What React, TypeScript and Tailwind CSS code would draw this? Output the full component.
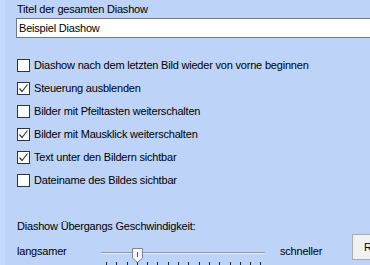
import React from "react";

function Box({ checked }: { checked: boolean }) {
  return (
    <div className="w-[13px] h-[13px] border border-[#333333] bg-white flex items-center justify-center shrink-0">
      {checked && (
        <svg width="11" height="11" viewBox="0 0 11 11">
          <path d="M1.5 5.5 L4 8.5 L9.5 1.5" fill="none" stroke="#3c3c3c" strokeWidth="1.2" />
        </svg>
      )}
    </div>
  );
}

const items: [string, boolean][] = [
  ["Diashow nach dem letzten Bild wieder von vorne beginnen", false],
  ["Steuerung ausblenden", true],
  ["Bilder mit Pfeiltasten weiterschalten", false],
  ["Bilder mit Mausklick weiterschalten", true],
  ["Text unter den Bildern sichtbar", true],
  ["Dateiname des Bildes sichtbar", false],
];

export default function App() {
  const ticks = Array.from({ length: 16 }, (_, i) => i);
  return (
    <div
      className="w-[370px] h-[265px] overflow-hidden bg-[#bdd3f8] flex text-[11px] tracking-[-0.2px] text-black"
      style={{ fontFamily: '"Liberation Sans", Arial, sans-serif' }}
    >
      <div className="w-[5px] bg-[#c4d9fb] shrink-0" />
      <div className="flex-1 flex flex-col pl-[12px] pt-[3px]">
        <div className="leading-[13px] h-[16px]">Titel der gesamten Diashow</div>
        <div className="-ml-[1px] h-[21px] border border-[#6f7c88] border-r-0 bg-white flex items-center pl-[2px] leading-[13px]">
          Beispiel Diashow
        </div>
        <div className="flex flex-col mt-[21px] gap-[10px]">
          {items.map(([t, c]) => (
            <div key={t} className="flex items-center gap-[4px] h-[13px]">
              <Box checked={c} />
              <span className="leading-[13px]">{t}</span>
            </div>
          ))}
        </div>
        <div className="mt-[33px] leading-[13px]">Diashow Übergangs Geschwindigkeit:</div>
        <div className="flex mt-[2px] items-start">
          <div className="w-[84px] pt-[10px] leading-[13px]">langsamer</div>
          <div className="relative w-[164px] h-[30px]">
            <div className="absolute left-0 right-0 top-[17px] h-[1px] bg-[#8a98a6]" />
            <div className="absolute left-0 right-0 top-[18px] h-[1px] bg-[#e6eefc]" />
            <svg className="absolute left-[31px] top-[13px]" width="11" height="15" viewBox="0 0 11 15">
              <path d="M0.5 0.5 H10.5 V10 L5.5 14.5 L0.5 10 Z" fill="#f4f6fa" stroke="#7a8694" />
              <path d="M5.5 4 V9" stroke="#555" />
            </svg>
            <div className="absolute top-[27px] left-[5px] flex gap-[9.3px]">
              {ticks.map((i) => (
                <div key={i} className="w-[1px] h-[4px] bg-[#222]" />
              ))}
            </div>
          </div>
          <div className="ml-[15px] pt-[10px] leading-[13px]">schneller</div>
          <div className="ml-auto mt-[-1px] w-[18px] h-[26px] bg-[#f1f1f1] border border-[#adadad] border-r-0 flex items-center pl-[11px]">
            R
          </div>
        </div>
      </div>
    </div>
  );
}
